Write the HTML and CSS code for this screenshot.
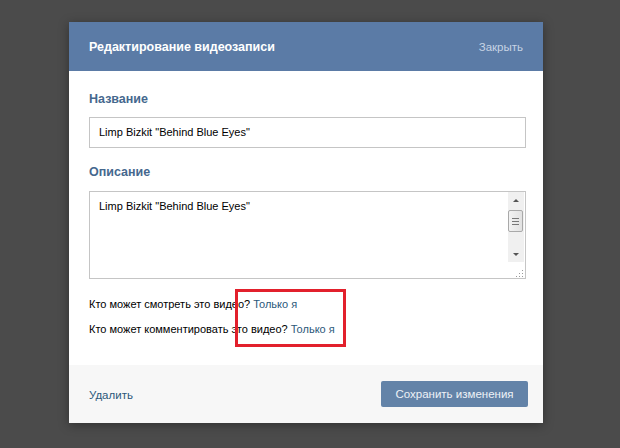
FILE: index.html
```html
<html>
    <head>
        <meta charset="utf-8">
        <link rel="stylesheet" href="styles.css">
    </head>
    <body>
        <div class="box">
            <div class="box-head">
                <div class="box-title">Редактирование видеозаписи</div>
                <div class="box-close">Закрыть</div>
            </div>
            <div class="box-body">
                <div class="label">Название</div>
                <div class="input">Limp Bizkit "Behind Blue Eyes"</div>
                <div class="label label-desc">Описание</div>
                <div class="textarea">
                    <div class="textarea-text">Limp Bizkit "Behind Blue Eyes"</div>
                    <div class="scroll">
                        <div class="scroll-bar">
                            <div class="arrow arrow-up"></div>
                            <div class="thumb"><i></i><i></i><i></i></div>
                            <div class="arrow arrow-down"></div>
                        </div>
                        <div class="grip">
                            <svg width="10" height="10" viewBox="0 0 10 10">
                                <rect x="8" y="2" width="1" height="1" fill="#9a9a9a"/>
                                <rect x="8" y="5" width="1" height="1" fill="#9a9a9a"/>
                                <rect x="5" y="5" width="1" height="1" fill="#9a9a9a"/>
                                <rect x="8" y="8" width="1" height="1" fill="#9a9a9a"/>
                                <rect x="5" y="8" width="1" height="1" fill="#9a9a9a"/>
                                <rect x="2" y="8" width="1" height="1" fill="#9a9a9a"/>
                            </svg>
                        </div>
                    </div>
                </div>
                <div class="privacy">
                    <div class="row">Кто может смотреть это видео? <a href="#">Только я</a></div>
                    <div class="row">Кто может комментировать это видео? <a href="#">Только я</a></div>
                    <div class="mark"></div>
                </div>
            </div>
            <div class="box-foot">
                <a href="#" class="delete">Удалить</a>
                <div class="button">Сохранить изменения</div>
            </div>
        </div>
    </body>
</html>
```

FILE: styles.css
```css
body {
    margin: 0;
    background-color: #4b4b4b;
    font-family: "Liberation Sans", Arial, sans-serif;
    font-size: 11px;
    color: #000;
}
a {
    color: #2b587a;
    text-decoration: none;
}
.box {
    width: 474px;
    margin: 22px 0 0 69px;
    background-color: #fff;
    box-shadow: 0 2px 10px rgba(0, 0, 0, 0.35);
}
.box-head {
    height: 49px;
    padding: 0 20px;
    display: flex;
    align-items: center;
    justify-content: space-between;
    background-color: #5b7ba6;
}
.box-title {
    color: #fff;
    font-weight: bold;
    font-size: 12.5px;
}
.box-close {
    color: #c7d4e4;
    font-size: 11.5px;
}
.box-body {
    padding: 21px 17px 0 20px;
}
.label {
    color: #45688e;
    font-weight: bold;
    font-size: 12.5px;
    height: 16px;
}
.label-desc {
    margin-top: 17px;
}
.input {
    margin-top: 9px;
    height: 29px;
    line-height: 29px;
    padding-left: 9px;
    border: 1px solid #c5c5c5;
    font-size: 11px;
}
.textarea {
    margin-top: 10px;
    height: 86px;
    border: 1px solid #c5c5c5;
    display: flex;
}
.textarea-text {
    flex: 1;
    padding: 8px 9px;
    font-size: 11px;
}
.scroll {
    width: 17px;
    display: flex;
    flex-direction: column;
    align-items: center;
    padding-right: 1px;
}
.scroll-bar {
    width: 16px;
    height: 70px;
    background-color: #f0f0f0;
    display: flex;
    flex-direction: column;
    align-items: center;
}
.arrow {
    width: 0;
    height: 0;
    border-left: 3px solid transparent;
    border-right: 3px solid transparent;
}
.arrow-up {
    margin-top: 7px;
    border-bottom: 3px solid #555;
}
.arrow-down {
    margin-top: 21px;
    border-top: 3px solid #555;
}
.thumb {
    margin-top: 8px;
    width: 13px;
    height: 20px;
    border: 1px solid #a9a9a9;
    border-radius: 2px;
    background: linear-gradient(to right, #f2f2f2, #e2e2e2);
    display: flex;
    flex-direction: column;
    align-items: center;
    justify-content: center;
    gap: 2px;
}
.thumb i {
    display: block;
    width: 7px;
    height: 1px;
    background-color: #777;
}
.grip {
    flex: 1;
    align-self: stretch;
    display: flex;
    align-items: flex-end;
    justify-content: flex-end;
}
.privacy {
    position: relative;
    padding: 18px 0 18px 0;
}
.row {
    height: 25px;
    line-height: 14px;
}
.mark {
    position: absolute;
    left: 146px;
    top: 10px;
    width: 105px;
    height: 52px;
    border: 3px solid #e2202c;
}
.box-foot {
    height: 58px;
    padding: 0 15px 0 20px;
    display: flex;
    align-items: center;
    justify-content: space-between;
    background-color: #f7f7f7;
}
.delete {
    font-size: 11.5px;
    margin-top: 2px;
}
.button {
    width: 147px;
    height: 26px;
    line-height: 26px;
    text-align: center;
    border-radius: 2px;
    background-color: #6383a8;
    color: #eef2f7;
    font-size: 11.5px;
}
```
